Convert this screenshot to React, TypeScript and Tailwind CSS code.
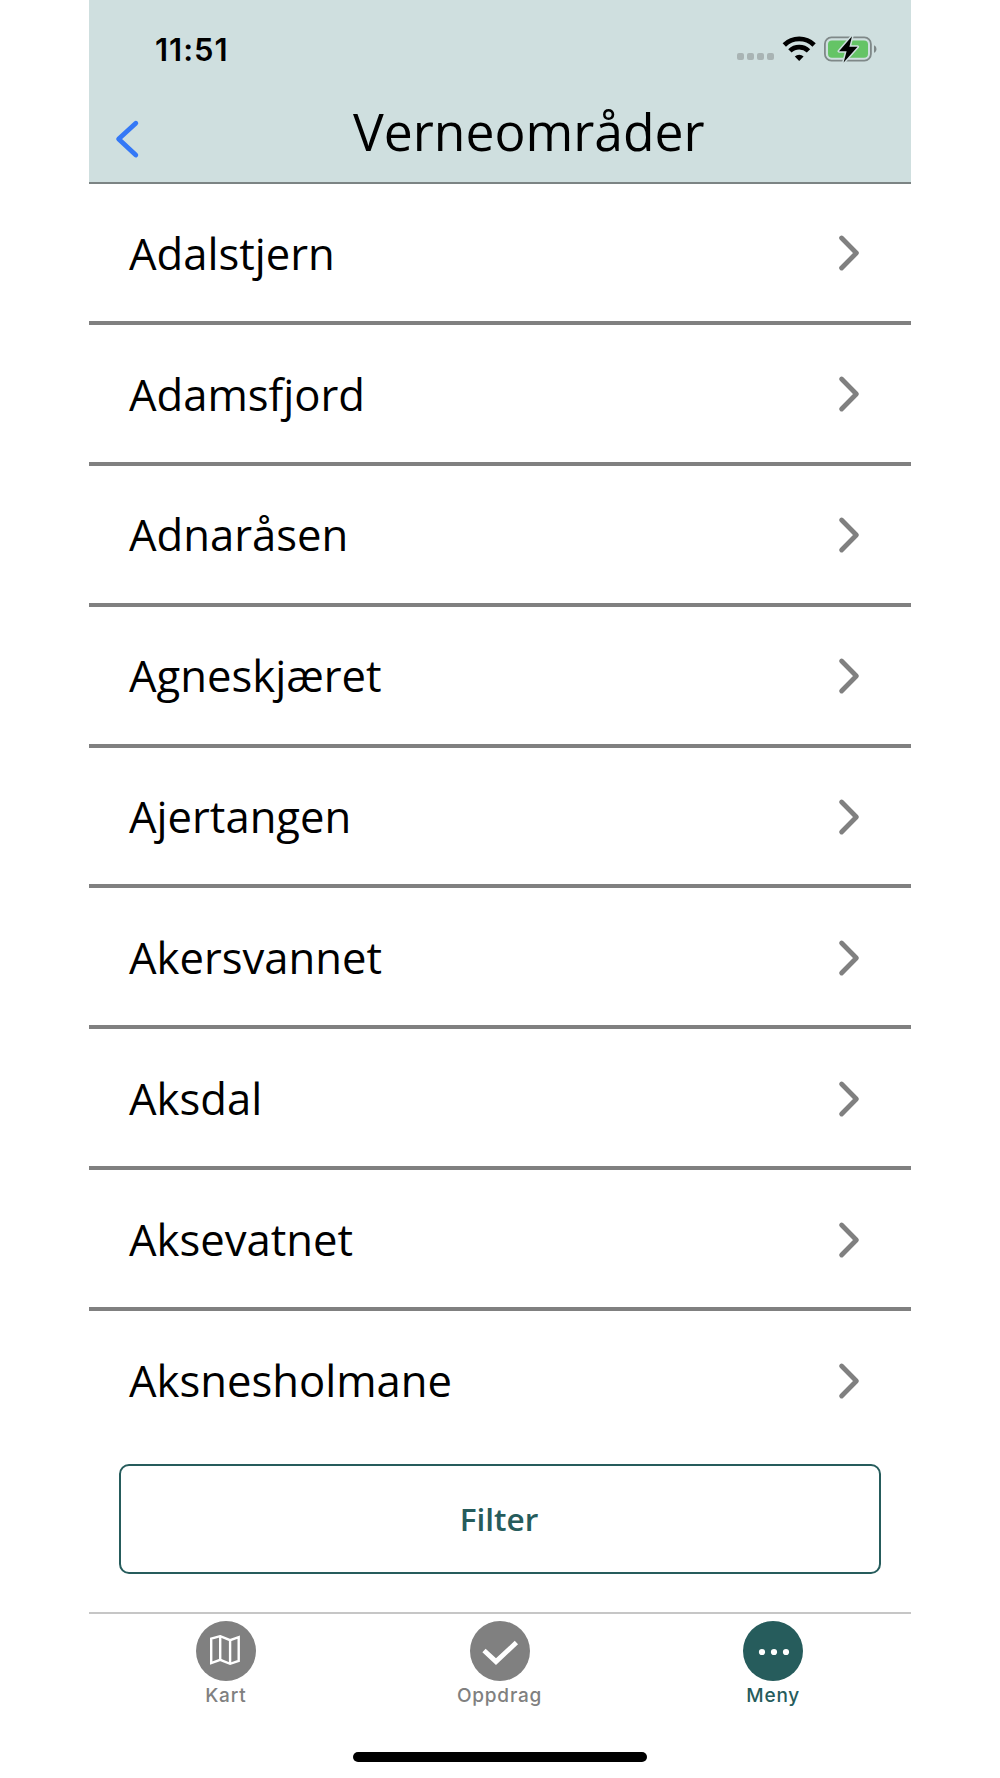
import { ReactNode } from 'react';

interface TabProps {
  label: string;
  active?: boolean;
  children: ReactNode;
}

const areas = [
  'Adalstjern',
  'Adamsfjord',
  'Adnaråsen',
  'Agneskjæret',
  'Ajertangen',
  'Akersvannet',
  'Aksdal',
  'Aksevatnet',
  'Aksnesholmane'
];

function StatusBar() {
  return (
    <div className="flex h-[98px] items-center justify-between pl-[66px] pr-[33px]">
      <span className="font-['Inter',sans-serif] text-[31px] leading-none font-semibold tracking-[1px]">11:51</span>
      <svg width="142" height="28" viewBox="0 0 142 28">
        <g fill="#a9b4b4">
          <rect x="1" y="18" width="7" height="7" rx="2" />
          <rect x="11" y="18" width="7" height="7" rx="2" />
          <rect x="21" y="18" width="7" height="7" rx="2" />
          <rect x="31" y="18" width="7" height="7" rx="2" />
        </g>
        <g fill="none" stroke="#000" strokeWidth="4.8">
          <path d="M48.3 9.9a21.5 21.5 0 0 1 29.8 0" />
          <path d="M53.9 15.9a13.3 13.3 0 0 1 18.6 0" />
        </g>
        <path d="M63.2 26l-4.4-4.4a6.4 6.4 0 0 1 8.8 0z" fill="#000" />
        <rect x="88.9" y="2.4" width="46" height="23.2" rx="6.5" fill="none" stroke="#7f8888" strokeWidth="1.8" />
        <rect x="92" y="5.4" width="40" height="17.4" rx="4" fill="#65c466" />
        <path d="M138 10.2c3.3 1.4 3.3 6.2 0 7.6z" fill="#7f8888" />
        <path
          d="M116 1.3L103 16.2h7.6l-3 11.2L121.6 11.8h-8.2z"
          fill="#000"
          stroke="#cfdfdf"
          strokeWidth="3"
          strokeLinejoin="round"
          paintOrder="stroke"
        />
      </svg>
    </div>
  );
}

function AreaRow({ name }: { name: string }) {
  return (
    <li className="flex h-[140.9px] items-center justify-between border-b-4 border-[#808080] pt-0.5 pl-10 pr-[50px]">
      <span className="text-[43.6px] leading-none">{name}</span>
      <svg width="24" height="40" viewBox="0 0 24 40" fill="none" stroke="#808080" strokeWidth="4.8" strokeLinecap="round" strokeLinejoin="round">
        <path d="M4.6 5L19.4 20L4.6 35" />
      </svg>
    </li>
  );
}

function Tab({ label, active = false, children }: TabProps) {
  return (
    <button className={`flex flex-1 flex-col items-center pt-[7px] ${active ? 'text-[#265c5c]' : 'text-[#808080]'}`}>
      <span className={`flex size-[60px] items-center justify-center rounded-full ${active ? 'bg-[#265c5c]' : 'bg-[#808080]'}`}>
        {children}
      </span>
      <span className="mt-1 font-['Inter',sans-serif] text-[19px] leading-[22px] font-medium tracking-[0.8px]">{label}</span>
    </button>
  );
}

export default function App() {
  return (
    <div className="h-[1778px] bg-white font-['Open_Sans','Noto_Sans',sans-serif] text-black">
      <div className="mx-auto flex h-full w-[822px] flex-col">
        <header className="h-[184px] border-b-2 border-[#7c8484] bg-[#cfdfdf]">
          <StatusBar />
          <div className="flex h-[66px] items-center">
            <button className="ml-6 pt-4">
              <svg width="28" height="44" viewBox="0 0 28 44" fill="none" stroke="#3478f6" strokeWidth="4.8" strokeLinecap="round" strokeLinejoin="round">
                <path d="M22.8 6.2L5.6 22L22.8 38" />
              </svg>
            </button>
            <h1 className="ml-[212px] pt-0.5 text-[51.6px] leading-none">Verneområder</h1>
          </div>
        </header>

        <ul className="h-[1256px] shrink-0 overflow-hidden">
          {areas.map((name) => (
            <AreaRow key={name} name={name} />
          ))}
        </ul>

        <div className="px-[30px] pt-6">
          <button className="flex h-[110px] w-full items-center justify-center rounded-[10px] border-2 border-[#265c5c] pr-0.5 text-[31.5px] leading-none font-semibold text-[#265c5c]">
            Filter
          </button>
        </div>

        <nav className="mt-[38px] flex border-t-2 border-[#c6c6c6] pr-px">
          <Tab label="Kart">
            <svg width="32" height="32" viewBox="0 0 32 32" fill="none" stroke="#fff" strokeWidth="2.4">
              <path d="M1.2 3.7L10.2 1.2L20.1 5.1L28.7 2.1V25.8L20.1 28.8L10.2 24.9L1.2 28.1Z" />
              <path d="M10.2 1.2V24.9M20.1 5.1V28.8" />
            </svg>
          </Tab>
          <Tab label="Oppdrag">
            <svg width="60" height="60" viewBox="0 0 60 60" fill="none" stroke="#fff" strokeWidth="4.8">
              <path d="M14 29.4L26 40.6L46.4 21.6" />
            </svg>
          </Tab>
          <Tab label="Meny" active>
            <svg width="60" height="60" viewBox="0 0 60 60" fill="#fff">
              <circle cx="19" cy="31" r="3.1" />
              <circle cx="31" cy="31" r="3.1" />
              <circle cx="43" cy="31" r="3.1" />
            </svg>
          </Tab>
        </nav>

        <div className="mx-auto mt-auto mb-4 h-[10px] w-[294px] rounded-full bg-black" />
      </div>
    </div>
  );
}
